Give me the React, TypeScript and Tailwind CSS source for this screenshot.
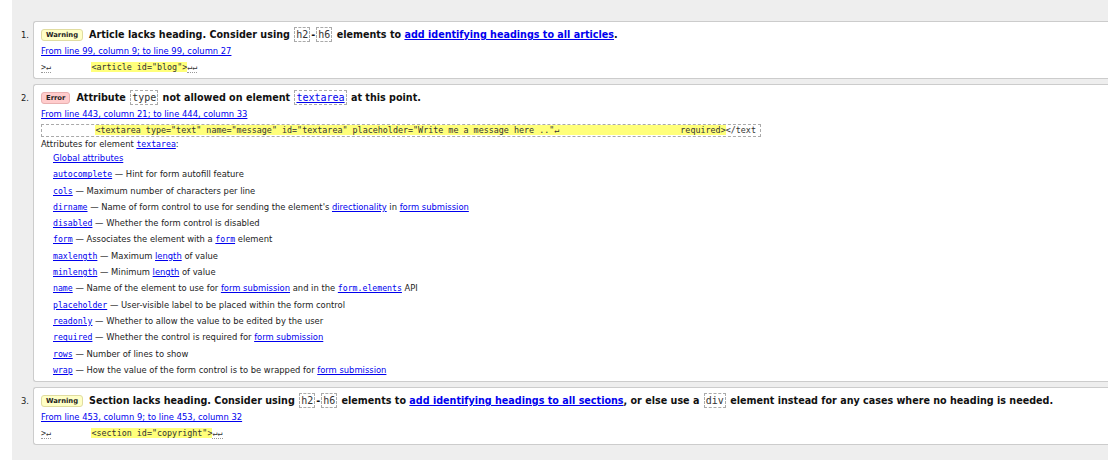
const sans = { fontFamily: '"DejaVu Sans", sans-serif' }

function Code({ children }: { children: React.ReactNode }) {
  return (
    <code className="font-['DejaVu_Sans_Mono',monospace] font-normal text-[10px] text-[#333] border border-dashed border-[#aaa] px-[1px] py-[1px] mx-[1px]">
      {children}
    </code>
  )
}

function Badge({ kind }: { kind: 'Warning' | 'Error' }) {
  const cls = kind === 'Warning'
    ? 'bg-[#ffffc6] border-[#e0dca0]'
    : 'bg-[#ffcccc] border-[#e8b0b0]'
  return (
    <span className={`inline-block ${cls} border rounded-[3px] px-[4px] leading-[10px] text-[6.8px] font-bold text-[#222] mr-[6px] align-[1px]`}>
      {kind}
    </span>
  )
}

function Card({ num, children }: { num: number; children: React.ReactNode }) {
  return (
    <li className="flex">
      <div className="w-[21px] shrink-0 text-right pr-[4px] pt-[6px] text-[8.4px] leading-[16px] text-[#222]">{num}.</div>
      <div className="flex-1 bg-white border border-r-0 border-[#ccc] rounded-l-[3px] pl-[7px] pt-[5px] pb-[3px]">
        {children}
      </div>
    </li>
  )
}

const A = 'text-[#0000ee] underline'
const mono = "font-['DejaVu_Sans_Mono',monospace]"

const attrs: { name: string; desc: React.ReactNode }[] = [
  { name: 'autocomplete', desc: 'Hint for form autofill feature' },
  { name: 'cols', desc: 'Maximum number of characters per line' },
  { name: 'dirname', desc: <>Name of form control to use for sending the element's <a className={A}>directionality</a> in <a className={A}>form submission</a></> },
  { name: 'disabled', desc: 'Whether the form control is disabled' },
  { name: 'form', desc: <>Associates the element with a <a className={`${A} ${mono} text-[8.2px]`}>form</a> element</> },
  { name: 'maxlength', desc: <>Maximum <a className={A}>length</a> of value</> },
  { name: 'minlength', desc: <>Minimum <a className={A}>length</a> of value</> },
  { name: 'name', desc: <>Name of the element to use for <a className={A}>form submission</a> and in the <a className={`${A} ${mono} text-[8.2px]`}>form.elements</a> API</> },
  { name: 'placeholder', desc: 'User-visible label to be placed within the form control' },
  { name: 'readonly', desc: 'Whether to allow the value to be edited by the user' },
  { name: 'required', desc: <>Whether the control is required for <a className={A}>form submission</a></> },
  { name: 'rows', desc: 'Number of lines to show' },
  { name: 'wrap', desc: <>How the value of the form control is to be wrapped for <a className={A}>form submission</a></> },
]

function Heading({ children }: { children: React.ReactNode }) {
  return <p className="text-[9.6px] font-bold text-[#111] leading-[16px] h-[16px] whitespace-nowrap">{children}</p>
}

function Location({ children }: { children: React.ReactNode }) {
  return <p className="text-[8.4px] leading-[16px] h-[16px]"><a className={A}>{children}</a></p>
}

function Extract({ tag }: { tag: string }) {
  return (
    <p className={`${mono} text-[8.4px] leading-[16px] h-[16px] text-[#333] whitespace-pre`}>
      <span className="border-b border-dotted border-[#999]">{'>↵'}</span>
      {'        '}
      <span className="bg-[#ffff7a]">{tag}</span>
      <span className="border-b border-dotted border-[#999]">{'↵↵'}</span>
    </p>
  )
}

export default function App() {
  return (
    <div style={sans} className="w-[1108px] h-[460px] bg-white flex overflow-hidden">
      <div className="w-[12px] shrink-0" />
      <div className="flex-1 bg-[#eeeeee] pt-[21px]">
        <ol className="flex flex-col gap-[5px]">
          <Card num={1}>
            <Heading>
              <Badge kind="Warning" />
              Article lacks heading. Consider using <Code>h2</Code>-<Code>h6</Code> elements to{' '}
              <a className={A}>add identifying headings to all articles</a>.
            </Heading>
            <Location>From line 99, column 9; to line 99, column 27</Location>
            <Extract tag={'<article id="blog">'} />
          </Card>

          <Card num={2}>
            <Heading>
              <Badge kind="Error" />
              Attribute <Code>type</Code> not allowed on element <Code><a className={A}>textarea</a></Code> at this point.
            </Heading>
            <Location>From line 443, column 21; to line 444, column 33</Location>
            <div className="h-[16px] flex items-center">
              <p className={`${mono} text-[8.4px] leading-[11px] text-[#333] whitespace-pre border border-dashed border-[#aaa] pl-[3px] w-[720px] overflow-hidden`}>
                {'          '}
                <span className="bg-[#ffff7a]">{'<textarea type="text" name="message" id="textarea" placeholder="Write me a message here .."↵                        required>'}</span>
                {'</text'}
              </p>
            </div>
            <p className="mt-[1px] text-[8.4px] leading-[11px] h-[11px] text-[#222]">
              Attributes for element <a className={`${A} ${mono} text-[8.2px]`}>textarea</a>:
            </p>
            <ul className="pl-[12px] text-[8.4px] text-[#222]">
              <li className="leading-[16.3px] h-[16.3px]"><a className={A}>Global attributes</a></li>
              {attrs.map(a => (
                <li key={a.name} className="leading-[16.3px] h-[16.3px] whitespace-nowrap">
                  <a className={`${A} ${mono} text-[8.2px]`}>{a.name}</a> — {a.desc}
                </li>
              ))}
            </ul>
          </Card>

          <Card num={3}>
            <Heading>
              <Badge kind="Warning" />
              Section lacks heading. Consider using <Code>h2</Code>-<Code>h6</Code> elements to{' '}
              <a className={A}>add identifying headings to all sections</a>, or else use a <Code>div</Code> element instead for any cases where no heading is needed.
            </Heading>
            <Location>From line 453, column 9; to line 453, column 32</Location>
            <Extract tag={'<section id="copyright">'} />
          </Card>
        </ol>
      </div>
    </div>
  )
}
